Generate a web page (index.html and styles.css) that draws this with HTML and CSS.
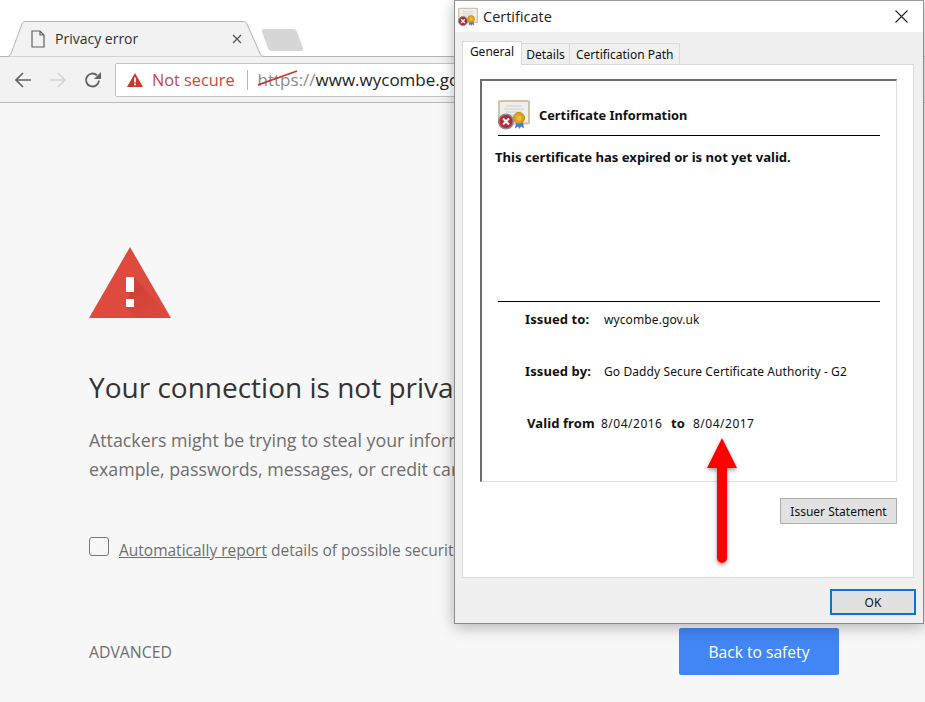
FILE: index.html
```html
<!DOCTYPE html>
<html lang="en">
<head>
<meta charset="utf-8">
<title>Privacy error</title>
<link rel="stylesheet" href="styles.css">
</head>
<body>
<svg class="defs" width="0" height="0" aria-hidden="true">
  <symbol id="cert" viewBox="0 0 32 30">
    <rect x="1" y="1" width="30" height="22.500" rx="1" fill="#f1efe9" stroke="#cfc4ab" stroke-width="2"/>
    <path d="M8 6h16M6 9h20M8 12h16M6 15h12" stroke="#c9ceda" stroke-width="1"/>
    <path d="M18.500 20l-1.500 8.500 3-2 1.500 2.500 1.500-2.500 3 2-1.500-8.500z" fill="#3f7fd6"/>
    <circle cx="21" cy="18" r="5.500" fill="#dfa21a" stroke="#c08a10"/>
    <circle cx="21" cy="18" r="2.600" fill="#eeb93c"/>
    <circle cx="8" cy="21.500" r="7.300" fill="#b5293a" stroke="#8f8f8f" stroke-width="1.500"/>
    <path d="M5 18.500l6 6M11 18.500l-6 6" stroke="#fff" stroke-width="2"/>
  </symbol>
</svg>

<div class="browser">
  <header class="tabstrip">
    <div class="tab">
      <svg class="tab-shape" width="265" height="37" viewBox="0 0 265 37"><path d="M0 36.500h7c2 0 3-1 4-3L22 4c1-2 2-2.500 4-2.500h217c2 0 3 .5 4 2.500l13 29.500c1 2 2 3 5 3" fill="#f2f2f2" stroke="#b4b4b4"/></svg>
      <svg class="page-icon" width="14" height="18" viewBox="0 0 14 18"><path d="M1 1h8l4 4v12H1z M9 1v4h4" fill="none" stroke="#5f5f5f" stroke-width="1.200"/></svg>
      <span class="tab-title">Privacy error</span>
      <svg class="tab-close" width="10" height="10" viewBox="0 0 10 10"><path d="M1 1l8 8M9 1l-8 8" stroke="#555" stroke-width="1.300"/></svg>
    </div>
    <div class="new-tab"></div>
  </header>

  <nav class="toolbar">
    <svg class="nav-icon" width="18" height="18" viewBox="0 0 18 18"><path d="M17 9H2M9 2L2 9l7 7" fill="none" stroke="#5f6368" stroke-width="1.700"/></svg>
    <svg class="nav-icon" width="18" height="18" viewBox="0 0 18 18"><path d="M1 9h15M9 2l7 7-7 7" fill="none" stroke="#d3d3d3" stroke-width="1.700"/></svg>
    <svg class="nav-icon" width="18" height="18" viewBox="0 0 18 18"><path d="M15 9.500A6.500 6.500 0 1 1 13 4.300" fill="none" stroke="#5f6368" stroke-width="1.900"/><path d="M17 1v7h-7z" fill="#5f6368"/></svg>
    <div class="omnibox">
      <svg class="warn-small" width="16" height="14" viewBox="0 0 16 14"><path d="M8 0l8 14H0z" fill="#c93a2e"/><path d="M7.100 4.500h1.800v5H7.100zM7.100 10.500h1.800v1.800H7.100z" fill="#fff"/></svg>
      <span class="not-secure">Not secure</span>
      <span class="omni-sep"></span>
      <span class="url"><span class="scheme">https<svg class="strike" width="40" height="16" viewBox="0 0 40 16"><path d="M0 15L39 1" stroke="#c5352a" stroke-width="1.700"/></svg></span><span class="slashes">://</span>www.wycombe.go</span>
    </div>
  </nav>

  <main class="interstitial">
    <svg class="warn-big" width="82" height="71" viewBox="0 0 82 71">
      <defs><linearGradient id="ws" x1="0" y1="0" x2="1" y2="1"><stop offset="0" stop-color="#b9302a" stop-opacity=".45"/><stop offset="1" stop-color="#b9302a" stop-opacity=".03"/></linearGradient></defs>
      <path d="M41 0l41 71H0z" fill="#df4a3e"/>
      <path d="M45 30L81 70l.4 1H48L37 60z" fill="url(#ws)"/>
      <path d="M37 30h8v15h-8zM37 52h8v8h-8z" fill="#fff"/>
    </svg>
    <div class="copy">
      <h1 class="headline">Your connection is not priva</h1>
      <p class="lede">Attackers might be trying to steal your inform<br>example, passwords, messages, or credit car</p>
      <div class="report">
        <span class="checkbox"></span>
        <span><a class="report-link">Automatically report</a> details of possible securit</span>
      </div>
    </div>
    <div class="actions">
      <span class="advanced">ADVANCED</span>
      <button class="safety">Back to safety</button>
    </div>
  </main>
</div>

<section class="dialog">
  <div class="titlebar">
    <svg class="title-icon" width="20" height="20"><use href="#cert"/></svg>
    <span class="title-text">Certificate</span>
    <svg class="title-close" width="13" height="13" viewBox="0 0 13 13"><path d="M.5.500l12 12M12.500.500l-12 12" stroke="#222" stroke-width="1.100"/></svg>
  </div>
  <div class="dialog-body">
    <div class="tabs">
      <span class="dtab dtab-active">General</span>
      <span class="dtab dtab-details">Details</span>
      <span class="dtab">Certification Path</span>
    </div>
    <div class="panel">
      <div class="info">
        <div class="info-head">
          <svg class="info-icon" width="32" height="30"><use href="#cert"/></svg>
          <span class="info-title">Certificate Information</span>
        </div>
        <p class="info-status">This certificate has expired or is not yet valid.</p>
        <div class="fields">
          <div class="field"><b class="field-label">Issued to:</b><span>wycombe.gov.uk</span></div>
          <div class="field"><b class="field-label">Issued by:</b><span>Go Daddy Secure Certificate Authority - G2</span></div>
          <div class="field field-valid"><b class="valid-label">Valid from</b><span class="date">8/04/2016</span><b class="valid-to">to</b><span class="date">8/04/2017</span></div>
        </div>
      </div>
      <div class="issuer-row"><button class="dbtn issuer">Issuer Statement</button></div>
    </div>
    <div class="ok-row"><button class="dbtn ok">OK</button></div>
  </div>
</section>

<svg class="arrow" width="50" height="140" viewBox="0 0 50 140">
  <defs><filter id="as" x="-30%" y="-10%" width="160%" height="120%"><feDropShadow dx="0" dy="2" stdDeviation="2" flood-color="#000" flood-opacity=".4"/></filter></defs>
  <path d="M25 5l15 30H30v90a5 5 0 0 1-10 0V35H10z" fill="#fe0000" filter="url(#as)"/>
</svg>
</body>
</html>
```
FILE: styles.css
```css
* { box-sizing: border-box; }
html, body { margin: 0; height: 100%; }
body {
  width: 925px;
  height: 702px;
  overflow: hidden;
  position: relative;
  background: #f7f7f7;
  font-family: "Open Sans", "Noto Sans", sans-serif;
}
.defs { position: absolute; }

/* Browser chrome */
.tabstrip {
  height: 57px;
  background: #fff;
  border-bottom: 1px solid #b4b4b4;
  display: flex;
  align-items: flex-end;
}
.tab {
  position: relative;
  width: 265px;
  height: 37px;
  margin-bottom: -1px;
  display: flex;
  align-items: center;
  padding: 0 0 0 31px;
  flex: none;
}
.tab-shape { position: absolute; left: 0; top: 0; }
.page-icon, .tab-title, .tab-close { position: relative; }
.page-icon { flex: none; margin-top: 1px; }
.tab-title {
  margin-left: 10px;
  font-size: 14px;
  color: #333;
  width: 177px;
}
.tab-close { margin-top: 1px; flex: none; }
.new-tab {
  width: 35px;
  height: 22px;
  margin: 0 0 5px 0;
  background: #d6d6d6;
  border-radius: 3px;
  transform: skewX(20deg);
  flex: none;
}
.toolbar {
  height: 46px;
  background: #f2f2f2;
  border-bottom: 1px solid #b8b8b8;
  display: flex;
  align-items: center;
  padding: 0 10px 0 14px;
}
.nav-icon { flex: none; margin-right: 17px; }
.omnibox {
  margin-left: -4px;
  flex: 1;
  height: 34px;
  background: #fff;
  border: 1px solid #c2c2c2;
  border-radius: 2px;
  display: flex;
  align-items: center;
  padding-left: 11px;
  font-size: 16.300px;
  white-space: nowrap;
}
.warn-small { flex: none; }
.not-secure { color: #c5493e; margin-left: 9px; }
.omni-sep { width: 1px; height: 20px; background: #b5b5b5; margin: 0 10px 0 12px; flex: none; }
.url { color: #222; font-size: 17px; }
.scheme { color: #8a8a8a; position: relative; }
.slashes { color: #8a8a8a; }
.strike { position: absolute; left: 0; top: 2px; }

/* Interstitial */
.interstitial { padding: 144px 86px 0 89px; }
.warn-big { display: block; }
.headline {
  margin: 49px 0 0;
  font-size: 28px;
  line-height: 40px;
  font-weight: 400;
  color: #333;
  white-space: nowrap;
}
.lede {
  margin: 19px 0 0;
  font-size: 17.800px;
  line-height: 29px;
  color: #6e6e6e;
  white-space: nowrap;
}
.report {
  margin-top: 54px;
  display: flex;
  align-items: center;
  gap: 10px;
  font-size: 15.500px;
  line-height: 24px;
  color: #6e6e6e;
  white-space: nowrap;
}
.checkbox {
  width: 20px;
  height: 19px;
  border: 1px solid #777;
  border-radius: 3px;
  margin-top: -7px;
  flex: none;
}
.report-link { text-decoration: underline; }
.actions {
  margin-top: 66px;
  display: flex;
  align-items: center;
  justify-content: space-between;
}
.advanced { font-size: 15.800px; color: #6e6e6e; }
.safety {
  width: 160px;
  height: 47px;
  border: 0;
  border-radius: 2px;
  background: #4285f4;
  color: #fff;
  font: 15.600px "Open Sans", sans-serif;
}

/* Certificate dialog */
.dialog {
  position: absolute;
  left: 454px;
  top: 0;
  width: 470px;
  height: 624px;
  background: #f0f0f0;
  border: 1px solid #8c8c8c;
  border-top-color: #9a9a9a;
  box-shadow: 0 3px 14px rgba(0, 0, 0, .28);
  display: flex;
  flex-direction: column;
  font-family: "Noto Sans", sans-serif;
  font-size: 12px;
  color: #111;
}
.titlebar {
  height: 31px;
  background: #fff;
  display: flex;
  align-items: center;
  padding: 0 15px 0 3px;
  flex: none;
}
.title-icon { flex: none; }
.title-text {
  margin-left: 5px;
  font: 14.500px "Open Sans", sans-serif;
  color: #222;
  flex: 1;
}
.title-close { flex: none; }
.dialog-body { flex: 1; padding: 9px 9px 0 7px; display: flex; flex-direction: column; }
.tabs { display: flex; align-items: flex-end; height: 23px; position: relative; z-index: 1; }
.dtab {
  height: 21px;
  padding: 0 6px;
  display: flex;
  align-items: center;
  border: 1px solid #d9d9d9;
  border-bottom: 0;
  margin-left: -1px;
  background: #f0f0f0;
  font: 12px "Noto Sans", sans-serif;
}
.dtab-active {
  height: 24px;
  width: 60px;
  justify-content: center;
  margin-left: 0;
  background: #fff;
  margin-bottom: -1px;
  padding-bottom: 4px;
}
.dtab-details { width: 49px; justify-content: center; }
.panel {
  width: 452px;
  height: 514px;
  background: #fff;
  border: 1px solid #d9d9d9;
  padding: 14px 16px 0 17px;
}
.info {
  height: 403px;
  border-style: solid;
  border-width: 2px 1px 1px 2px;
  border-color: #6d6d6d #dfdfdf #dfdfdf #6d6d6d;
  padding: 19px 16px 0 13px;
}
.info-head {
  margin-left: 3px;
  height: 36px;
  border-bottom: 1px solid #000;
  display: flex;
  align-items: flex-start;
}
.info-icon { flex: none; }
.info-title { margin: 7px 0 0 9px; font: 700 12.800px/17px "Noto Sans", sans-serif; }
.info-status { margin: 13px 0 0; font: 700 13.100px/17px "Noto Sans", sans-serif; height: 152px; }
.fields { margin-left: 3px; border-top: 1px solid #000; padding-top: 9px; display: flex; flex-direction: column; gap: 34px; letter-spacing: .1px; }
.field { display: flex; line-height: 17px; height: 18px; }
.field b { font: 700 13px/17px "Noto Sans", sans-serif; white-space: nowrap; }
.field-label { width: 106px; padding-left: 27px; flex: none; }
.field-valid { padding-left: 29px; gap: 8px; }
.valid-label { width: 66px; flex: none; }
.date { letter-spacing: .5px; width: 62px; flex: none; }
.valid-to { margin: 0 1px 0 0; width: 13px; flex: none; }
.issuer-row { display: flex; justify-content: flex-end; margin-top: 16px; }
.dbtn {
  background: #e1e1e1;
  border: 1px solid #adadad;
  color: #111;
  font: 12px "Noto Sans", sans-serif;
  padding: 0;
}
.issuer { width: 117px; height: 26px; }
.ok-row { display: flex; justify-content: flex-end; padding-top: 11px; }
.ok { width: 86px; height: 26px; border: 2px solid #0078d7; margin-right: -2px; }

/* Annotation arrow */
.arrow { position: absolute; left: 697px; top: 433px; }
```
